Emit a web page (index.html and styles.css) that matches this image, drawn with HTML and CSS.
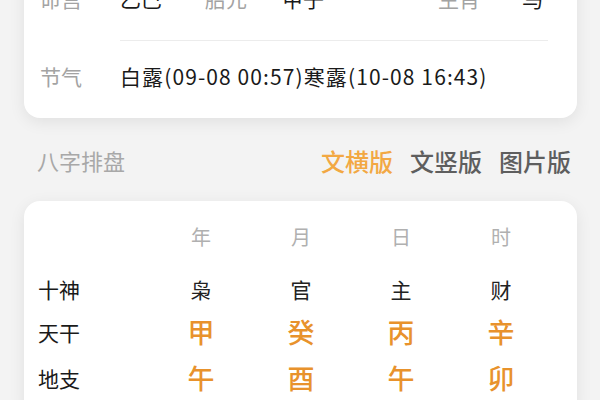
FILE: index.html
```html
<!DOCTYPE html>
<html lang="zh-CN">
<head>
<meta charset="utf-8">
<title>八字排盘</title>
<link rel="stylesheet" href="styles.css">
</head>
<body>
<div class="page">
  <section class="card info-card">
    <div class="info-row first">
      <span class="lbl">命宫</span>
      <span class="val">乙巳</span>
      <span class="lbl">胎元</span>
      <span class="val">甲子</span>
      <span class="lbl">生肖</span>
      <span class="val">马</span>
    </div>
    <div class="divider"></div>
    <div class="info-row second">
      <span class="lbl">节气</span>
      <span class="val term">白露(09-08 00:57)寒露(10-08 16:43)</span>
    </div>
  </section>

  <div class="section-head">
    <span class="section-title">八字排盘</span>
    <div class="tabs">
      <span class="tab active">文横版</span>
      <span class="tab">文竖版</span>
      <span class="tab">图片版</span>
    </div>
  </div>

  <section class="card chart-card">
    <div class="grid-row head">
      <span></span><span>年</span><span>月</span><span>日</span><span>时</span>
    </div>
    <div class="grid-row shen">
      <span class="rl">十神</span><span>枭</span><span>官</span><span>主</span><span>财</span>
    </div>
    <div class="grid-row gz">
      <span class="rl">天干</span><span>甲</span><span>癸</span><span>丙</span><span>辛</span>
    </div>
    <div class="grid-row gz">
      <span class="rl">地支</span><span>午</span><span>酉</span><span>午</span><span>卯</span>
    </div>
  </section>
</div>
</body>
</html>
```

FILE: styles.css
```css
html, body {
  margin: 0;
  padding: 0;
}
body {
  background: #f3f3f3;
  font-family: "Noto Sans CJK SC", "Noto Sans", sans-serif;
  color: #1a1a1a;
  overflow: hidden;
}
.page {
  padding: 0 23px 0 24px;
}
.card {
  background: #fff;
  border-radius: 16px;
  box-shadow: 0 4px 16px rgba(0, 0, 0, 0.08);
}
.info-card {
  margin-top: -37px;
  padding: 20px 29px 27px 16px;
}
.info-row {
  display: grid;
  font-size: 21px;
  line-height: 30px;
  align-items: center;
}
.info-row.first {
  grid-template-columns: 80px 85px 77px 156px 84px 1fr;
  padding-bottom: 27px;
}
.info-row.second {
  grid-template-columns: 80px 1fr;
  padding-top: 20px;
}
.lbl {
  color: #a3a3a3;
}
.val {
  color: #1a1a1a;
  white-space: nowrap;
}
.val.term {
  letter-spacing: 1.1px;
}
.divider {
  margin-left: 80px;
  border-top: 1px solid #ececec;
}
.section-head {
  display: flex;
  justify-content: space-between;
  align-items: center;
  margin: 26px 0 25px;
  padding: 0 6px 0 13px;
  height: 32px;
}
.section-title {
  font-size: 22px;
  color: #a8a8a8;
}
.tabs {
  display: flex;
  gap: 17px;
}
.tab {
  font-size: 24px;
  font-weight: 500;
  color: #5e5e5e;
}
.tab.active {
  color: #f2a843;
}
.chart-card {
  padding: 20px 0 10px 14px;
  border-bottom-left-radius: 0;
  border-bottom-right-radius: 0;
}
.grid-row {
  display: grid;
  grid-template-columns: 113px repeat(4, 100px);
  align-items: center;
}
.grid-row span {
  text-align: center;
}
.grid-row span.rl {
  text-align: left;
  color: #1a1a1a;
  font-weight: 400;
}
.grid-row.head {
  font-size: 20px;
  line-height: 32px;
  color: #b0b0b0;
}
.grid-row.shen {
  margin-top: 20px;
  font-size: 21px;
  line-height: 32px;
  color: #222;
}
.grid-row.gz {
  margin-top: 7px;
  font-size: 27px;
  font-weight: 500;
  line-height: 40px;
  color: #e8922c;
}
.grid-row.gz + .grid-row.gz {
  margin-top: 6px;
}
.grid-row.gz span.rl {
  font-size: 21px;
}
```
